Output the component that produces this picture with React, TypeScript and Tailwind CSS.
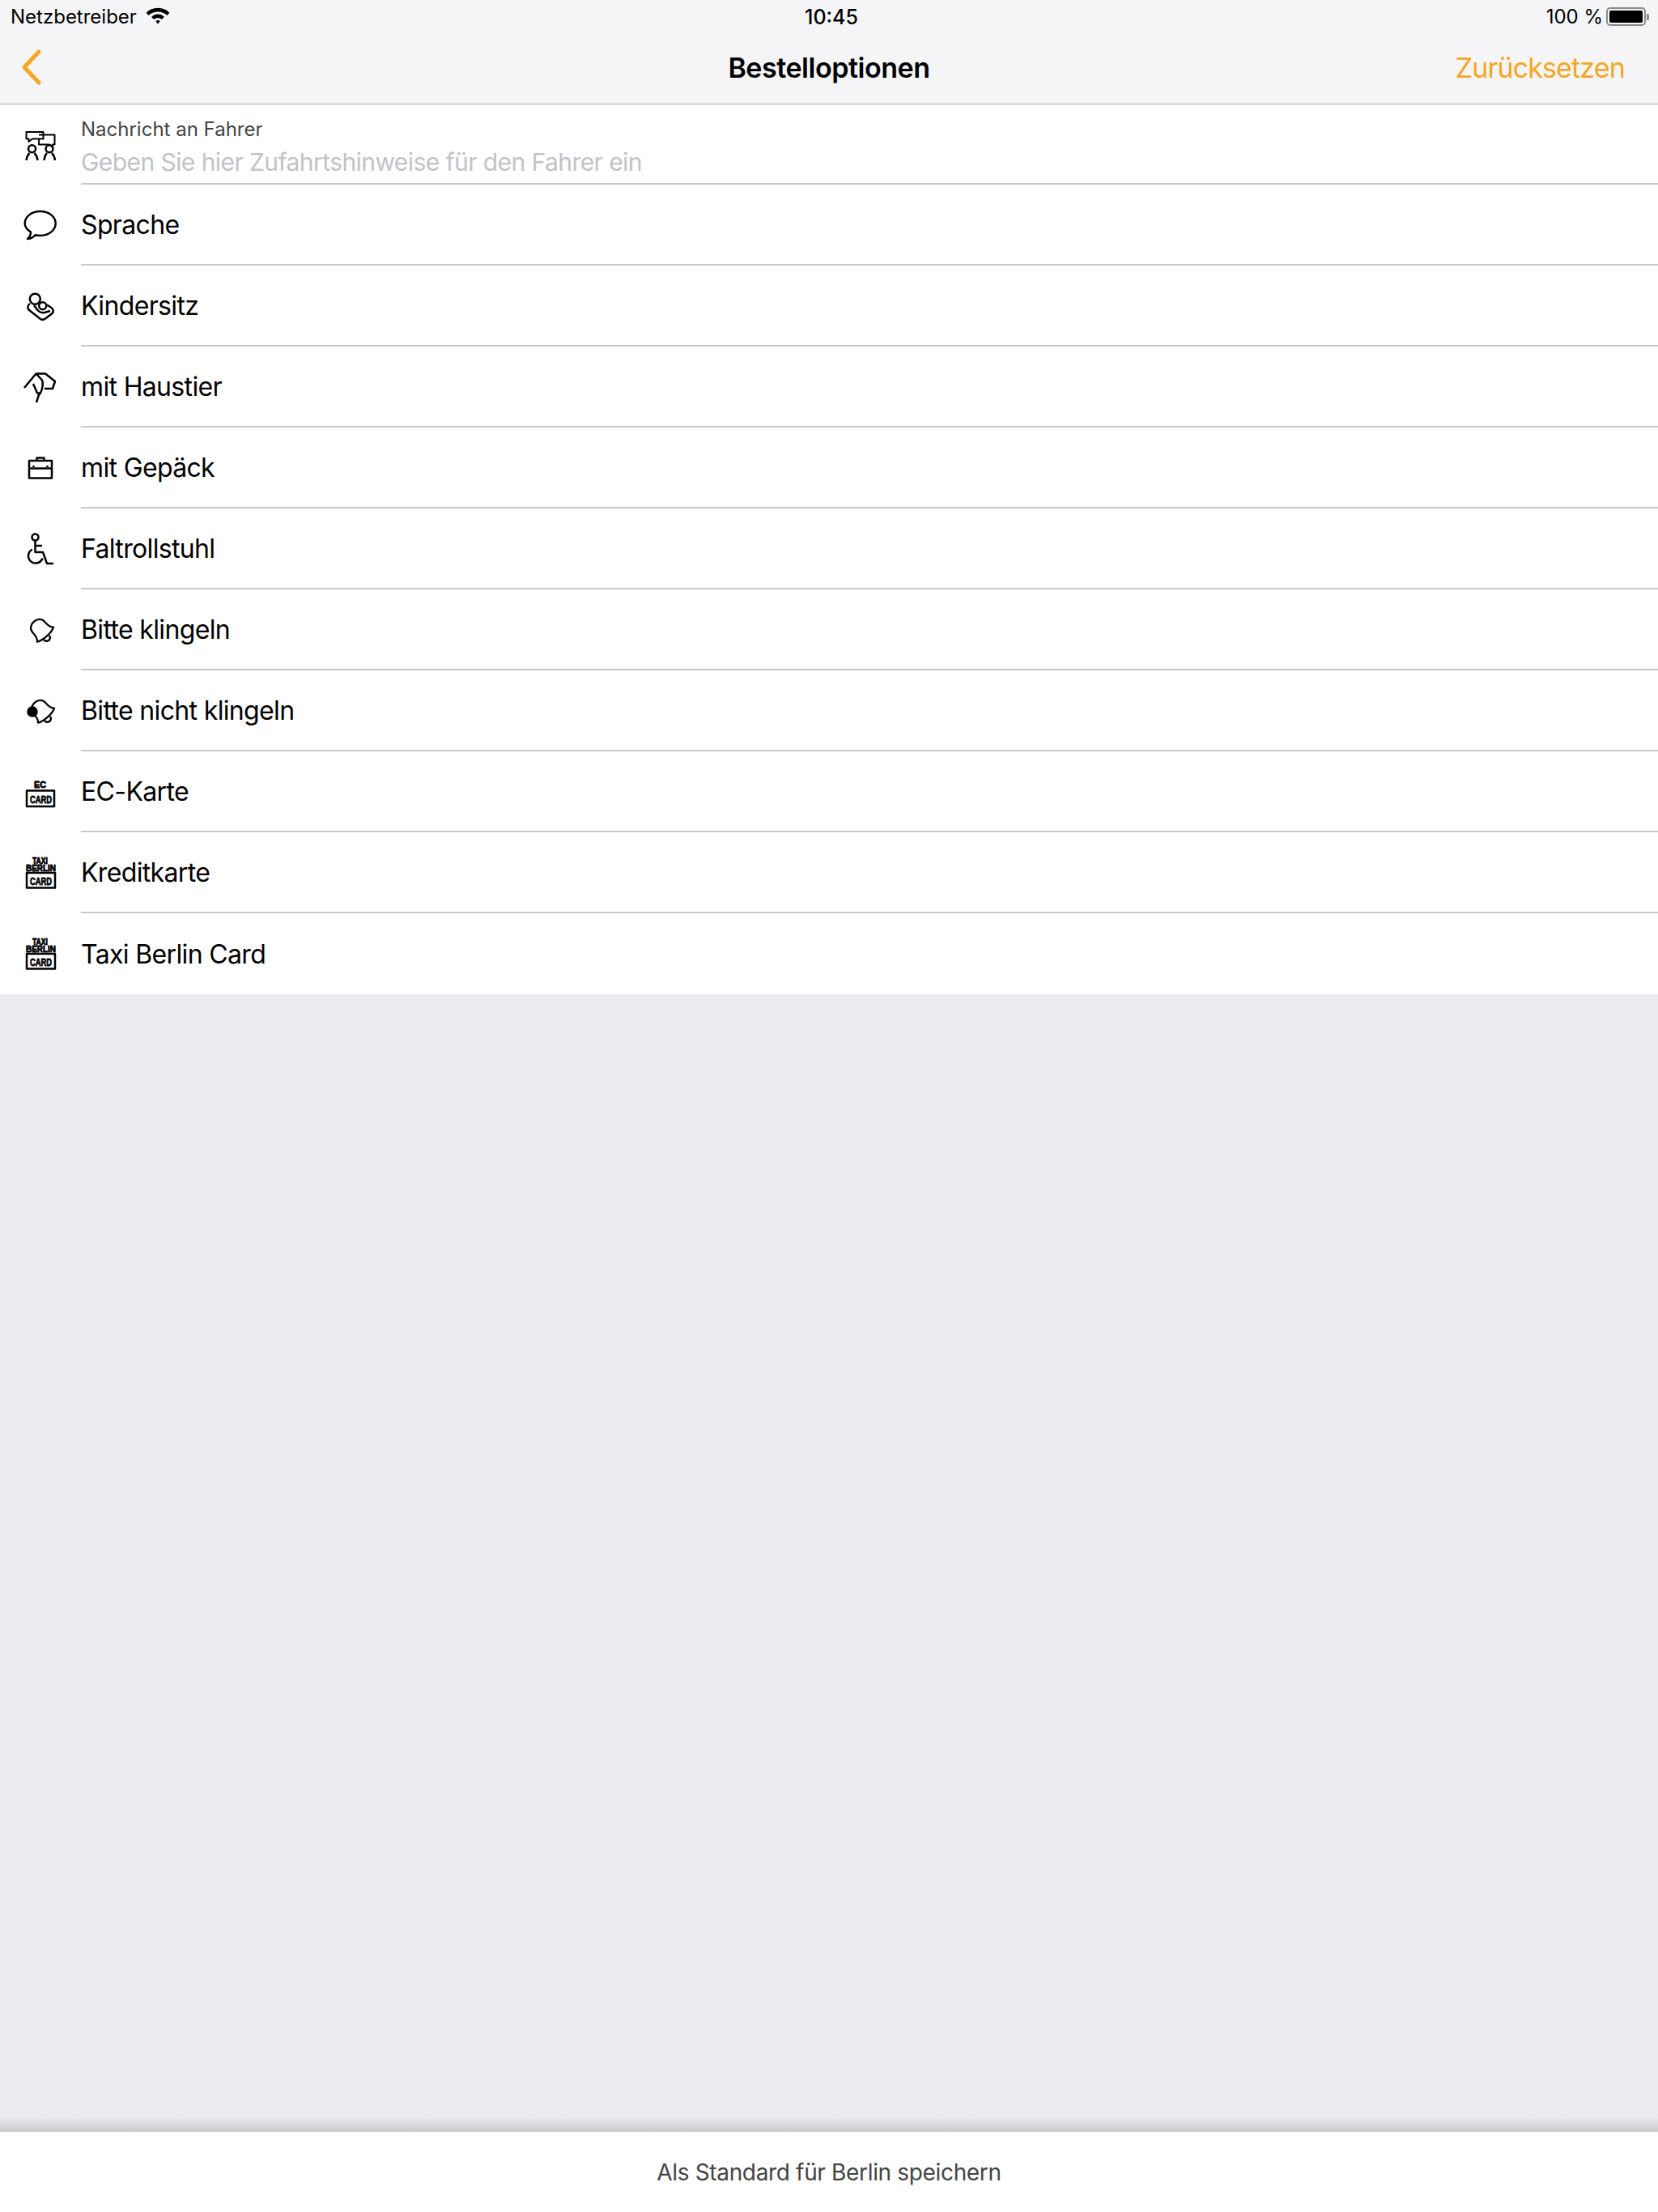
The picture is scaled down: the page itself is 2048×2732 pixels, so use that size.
import type { ReactNode } from 'react';

const Icon = ({ children }: { children: ReactNode }) => (
  <svg width="60" height="60" viewBox="0 0 60 60" fill="none" stroke="#000" strokeWidth="2.5" strokeLinejoin="round" className="block">
    {children}
  </svg>
);

const Label = ({ x, y, w, size, children }: { x: number; y: number; w: number; size: number; children: string }) => (
  <text
    x={x}
    y={y}
    textLength={w}
    lengthAdjust="spacingAndGlyphs"
    fontFamily="'Liberation Sans', sans-serif"
    fontWeight="700"
    fontSize={size}
    fill="#000"
    stroke="#000"
    strokeWidth="0.8"
  >
    {children}
  </text>
);

const bell = 'M-15 10C-11 7 -11 0 -11 -4C-11 -17 11 -17 11 -4C11 0 11 7 15 10C8 14 -8 14 -15 10Z';

const taxiCard = (
  <>
    <Label x={20} y={19} w={19} size={10}>TAXI</Label>
    <Label x={12} y={27.5} w={37} size={10}>BERLIN</Label>
    <rect x="13" y="30" width="35" height="18.5" />
    <Label x={17} y={44.5} w={27} size={13.5}>CARD</Label>
  </>
);

const rows: { label: string; icon: ReactNode }[] = [
  {
    label: 'Sprache',
    icon: (
      <path d="M18 38.5C13 35.5 10.7 32 10.7 28C10.7 19.7 19 13 29.7 13C40.3 13 48.7 19.7 48.7 28C48.7 36.3 40 43 29.7 43C27.5 43 25.5 42.8 23.5 42.3C21 45 17.5 47 14 47C16.5 45 18 42 18 38.5Z" />
    ),
  },
  {
    label: 'Kindersitz',
    icon: (
      <>
        <circle cx="23.3" cy="21.3" r="6.5" />
        <circle cx="32.7" cy="29.7" r="4.5" />
        <path d="M17 27C14 29 13.5 33 16 35L30 46C32 47.5 34 47 36 45.5L44 39.5C47 37 46 33 42 31L38 28.5" />
        <path d="M22 29L26 34.5C28 37 32 38.5 35 38L42 36" />
      </>
    ),
  },
  {
    label: 'mit Haustier',
    icon: (
      <path d="M10 31L24.5 13.5H36L48 23L45 32H35M25 14L32 21.5C33.5 26 33 31 30 37.5H26L21 26M30 37.5L28 39.5L25 49" />
    ),
  },
  {
    label: 'mit Gepäck',
    icon: (
      <>
        <rect x="16" y="21" width="28" height="21.5" />
        <path d="M16 30.5H44M25.5 21V17.5H34.5V21" />
        <path d="M21.5 27V29M38.5 27V29" />
      </>
    ),
  },
  {
    label: 'Faltrollstuhl',
    icon: (
      <>
        <circle cx="23.5" cy="15.5" r="4" />
        <path d="M23.5 19.5V34H33L38 48H46" />
        <path d="M23.5 26H32" />
        <path d="M20 30.5A9 9 0 1 0 32.5 41.5" />
      </>
    ),
  },
  {
    label: 'Bitte klingeln',
    icon: (
      <>
        <g transform="translate(30 29) scale(0.9) rotate(-42)">
          <path d={bell} />
        </g>
        <path d="M34 42A4 4 0 0 0 41 37" />
      </>
    ),
  },
  {
    label: 'Bitte nicht klingeln',
    icon: (
      <>
        <g transform="translate(31 29) scale(0.9) rotate(-42)">
          <path d={bell} />
        </g>
        <path d="M35 42A4 4 0 0 0 42 37" />
        <circle cx="20" cy="31" r="5.5" fill="#000" />
      </>
    ),
  },
  {
    label: 'EC-Karte',
    icon: (
      <>
        <Label x={22} y={25} w={15} size={11}>EC</Label>
        <rect x="13" y="28.5" width="34" height="19.5" />
        <Label x={17} y={43.5} w={27} size={13.5}>CARD</Label>
      </>
    ),
  },
  { label: 'Kreditkarte', icon: taxiCard },
  { label: 'Taxi Berlin Card', icon: taxiCard },
];

const StatusBar = () => (
  <div className="relative flex h-[40px] items-center justify-between pl-[13px] pr-[11px] pt-[1px] text-[24px] text-black">
    <div className="flex items-center gap-[11px]">
      <span>Netzbetreiber</span>
      <svg width="30" height="23" viewBox="0 0 28 21" fill="#000" className="mb-[2px]">
        <path d="M14 1.5C19.2 1.5 23.8 3.5 27.4 6.9L24.6 10C21.8 7.4 18 5.8 14 5.8C10 5.8 6.2 7.4 3.4 10L0.6 6.9C4.2 3.5 8.8 1.5 14 1.5Z" />
        <path d="M14 8.6C16.6 8.6 19.3 9.7 21.4 11.7L18.6 14.8C17.3 13.6 15.7 13 14 13C12.3 13 10.7 13.6 9.4 14.8L6.6 11.7C8.7 9.7 11.4 8.6 14 8.6Z" />
        <path d="M14 15.6C15 15.6 15.8 15.9 16.5 16.6L14 20L11.5 16.6C12.2 15.9 13 15.6 14 15.6Z" />
      </svg>
    </div>
    <span className="absolute left-[994px] top-[3px] text-[25px] font-medium">10:45</span>
    <div className="flex items-center gap-[4px]">
      <span>100 %</span>
      <div className="flex items-center gap-[1px]">
        <div className="h-[23px] w-[49px] rounded-[5px] border-2 border-[#8a8a8a] p-[2px]">
          <div className="h-full w-full rounded-[2px] bg-black" />
        </div>
        <div className="h-[8px] w-[3px] rounded-r-[2px] bg-[#8a8a8a]" />
      </div>
    </div>
  </div>
);

const NavBar = () => (
  <div className="relative flex h-[89px] items-center justify-between border-b border-[#a9a9ad] pb-[2px] pl-[26px] pr-[41px]">
    <svg width="26" height="44" viewBox="0 0 26 44" fill="none" stroke="#f5a623" strokeWidth="5" strokeLinecap="round" strokeLinejoin="round">
      <path d="M22 3L4 22L22 41" />
    </svg>
    <span className="absolute left-0 right-0 top-[18px] text-center text-[34px] font-semibold tracking-[-0.45px] text-black">Bestelloptionen</span>
    <span className="text-[34px] tracking-[-0.85px] text-[#f5a623]">Zurücksetzen</span>
  </div>
);

const Row = ({ icon, last, children }: { icon: ReactNode; last?: boolean; children: ReactNode }) => (
  <div className="flex h-[100px] bg-white first:h-[99px]">
    <div className="flex w-[100px] items-center pl-[20px]">{icon}</div>
    <div className={last ? 'flex flex-1 items-center' : 'flex flex-1 items-center border-b-2 border-[#c8c8cc]'}>{children}</div>
  </div>
);

export default function App() {
  return (
    <div className="flex min-h-[2732px] flex-col bg-[#ebebf1] font-['Inter',sans-serif]">
      <div className="bg-[#f5f5f8]">
        <StatusBar />
        <NavBar />
      </div>
      <div className="flex flex-col">
        <Row
          icon={
            <Icon>
              <path d="M12.5 14H33.5V22.5H20L15.5 26V22.5H12.5Z" strokeWidth="2" />
              <path d="M28 17.5H47.5V29.5H45V33L41 29.5H28V22.5" strokeWidth="2" />
              <circle cx="19.5" cy="34.7" r="4.5" />
              <circle cx="41" cy="34.7" r="4.5" />
              <path d="M12.5 49C13 45.5 14.5 42 16.5 40M26.5 49C26 45.5 24.5 42 22.5 40M34.5 49C35 45.5 36 42 38 40M48 49C47.5 45.5 46 42 44 40" />
            </Icon>
          }
        >
          <div className="flex flex-col pt-[9px]">
            <span className="text-[24px] leading-[36px] text-[#444444]">Nachricht an Fahrer</span>
            <span className="text-[30px] leading-[44px] tracking-[-0.57px] text-[#c2c2c8]">Geben Sie hier Zufahrtshinweise für den Fahrer ein</span>
          </div>
        </Row>
        {rows.map((row, i) => (
          <Row key={row.label} icon={<Icon>{row.icon}</Icon>} last={i === rows.length - 1}>
            <span className="pt-[1px] text-[32px] tracking-[-0.65px] text-black">{row.label}</span>
          </Row>
        ))}
      </div>
      <div className="flex flex-1 flex-col justify-end">
        <div className="h-[18px] bg-gradient-to-b from-[#ebebf1] to-[#c9c9ce]" />
      </div>
      <div className="flex h-[99px] items-center justify-center bg-white">
        <span className="text-[28px] tracking-[-0.34px] text-[#444444]">Als Standard für Berlin speichern</span>
      </div>
    </div>
  );
}
